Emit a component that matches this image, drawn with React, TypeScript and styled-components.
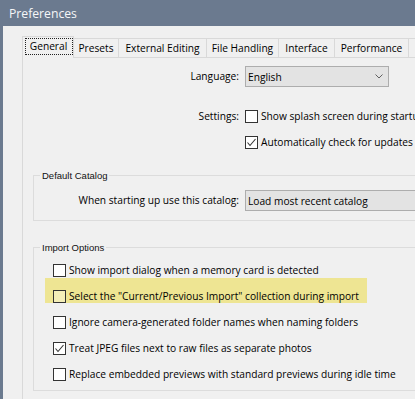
import React from 'react';
import styled, { createGlobalStyle } from 'styled-components';

const GlobalStyle = createGlobalStyle`
  html, body {
    margin: 0;
    padding: 0;
    background: #f0f0f0;
  }
  body {
    font-family: "Open Sans", "Noto Sans", Arial, sans-serif;
  }
`;

const Window = styled.div`
  width: 415px;
  height: 399px;
  overflow: hidden;
  background: #6b7a8f;
  display: flex;
  flex-direction: column;
`;

const TitleBar = styled.div`
  height: 26px;
  flex: none;
  display: flex;
  align-items: center;
  padding-left: 9px;
  color: #f5f6f8;
  font-family: "Open Sans", sans-serif;
  font-size: 12.2px;
`;

const Body = styled.div`
  flex: 1;
  margin-left: 3px;
  padding-top: 10px;
  background: #f0f0f0;
  overflow: hidden;
  display: flex;
  flex-direction: column;
  font-family: "Open Sans", sans-serif;
  font-size: 10.2px;
  color: #000;
`;

const TabStrip = styled.div`
  display: flex;
  align-items: flex-end;
  height: 21px;
  margin-left: 19px;
  flex: none;
`;

const Tab = styled.div<{ $width: number; $active?: boolean; $first?: boolean }>`
  box-sizing: border-box;
  flex: none;
  width: ${p => p.$width}px;
  height: ${p => (p.$active ? 22 : 19)}px;
  margin-bottom: ${p => (p.$active ? -1 : 0)}px;
  position: relative;
  z-index: ${p => (p.$active ? 1 : 0)};
  background: #f0f0f0;
  border-top: 1px solid #d9d9d9;
  border-right: 1px solid #d9d9d9;
  border-left: ${p => (p.$first ? '1px solid #d9d9d9' : 'none')};
  display: flex;
  justify-content: center;
  align-items: ${p => (p.$active ? 'flex-start' : 'center')};
  line-height: 15px;
  white-space: nowrap;
`;

const FocusRing = styled.span`
  box-sizing: border-box;
  display: flex;
  align-items: center;
  justify-content: center;
  width: 48px;
  height: 17px;
  margin-top: 1px;
  margin-left: 1px;
  border: 1px dotted #222;
`;

const Panel = styled.div`
  flex: 1;
  width: 560px;
  margin-left: 19px;
  padding-top: 8px;
  border-top: 1px solid #d9d9d9;
  border-left: 1px solid #d9d9d9;
`;

const FieldRow = styled.div<{ $labelWidth: number; $top?: boolean }>`
  display: grid;
  grid-template-columns: ${p => p.$labelWidth}px max-content;
  column-gap: 6px;
  align-items: ${p => (p.$top ? 'start' : 'center')};
  margin-top: ${p => (p.$top ? 23 : 0)}px;
`;

const Label = styled.div`
  text-align: right;
  line-height: 13px;
  white-space: nowrap;
`;

const Select = styled.div<{ $width: number }>`
  box-sizing: border-box;
  width: ${p => p.$width}px;
  height: 21px;
  padding: 0 5px 0 2px;
  background: #e3e3e3;
  border: 1px solid #adadad;
  display: flex;
  align-items: center;
  justify-content: space-between;
  white-space: nowrap;
`;

const CheckList = styled.div`
  display: flex;
  flex-direction: column;
  gap: 13px;
`;

const CheckRow = styled.div`
  display: flex;
  align-items: center;
  gap: 3px;
  height: 13px;
  line-height: 13px;
  white-space: nowrap;
`;

const Box = styled.span<{ $tint?: boolean }>`
  box-sizing: border-box;
  flex: none;
  width: 13px;
  height: 13px;
  border: 1px solid #333;
  background: ${p => (p.$tint ? 'rgba(255, 255, 255, 0.35)' : '#fff')};
  display: flex;
  align-items: center;
  justify-content: center;
`;

const Group = styled.fieldset<{ $gapTop: number }>`
  width: 520px;
  min-width: 0;
  margin: ${p => p.$gapTop}px 0 0 10px;
  padding: 9px 0 9px 0;
  border: 1px solid #dcdcdc;
`;

const Legend = styled.legend`
  margin-left: 6px;
  padding: 0 2px;
  font-family: "Liberation Sans", Arial, sans-serif;
  font-size: 9.5px;
  line-height: 11px;
  color: #111;
`;

const ImportList = styled.div`
  display: flex;
  flex-direction: column;
  gap: 13px;
  padding-top: 2px;
`;

const ImportItem = styled.div<{ $highlight?: boolean }>`
  width: fit-content;
  margin-left: 11px;
  padding: ${p => (p.$highlight ? '12px 8px 0 8px' : '0 8px 0 8px')};
  margin-top: ${p => (p.$highlight ? -12 : 0)}px;
  background: ${p => (p.$highlight ? '#eee593' : 'transparent')};
`;

const Chevron = () => (
  <svg width="8" height="5" viewBox="0 0 8 5">
    <path d="M0.5 0.5 L4 4 L7.5 0.5" fill="none" stroke="#606060" strokeWidth="1" />
  </svg>
);

const Check = () => (
  <svg width="11" height="11" viewBox="0 0 11 11">
    <path d="M1.5 5.5 L4 8.5 L9.5 2" fill="none" stroke="#333" strokeWidth="1.1" />
  </svg>
);

const CheckItem: React.FC<{ checked?: boolean; tint?: boolean; children: React.ReactNode }> = ({ checked, tint, children }) => (
  <CheckRow>
    <Box $tint={tint}>{checked && <Check />}</Box>
    <span>{children}</span>
  </CheckRow>
);

// the last tab sits past the window edge, only its border shows
const tabs = [
  { name: 'General', width: 52 },
  { name: 'Presets', width: 45 },
  { name: 'External Editing', width: 88 },
  { name: 'File Handling', width: 72 },
  { name: 'Interface', width: 56 },
  { name: 'Performance', width: 74 },
  { name: '', width: 70 },
];

const importOptions = [
  { text: 'Show import dialog when a memory card is detected' },
  { text: 'Select the "Current/Previous Import" collection during import', highlight: true },
  { text: 'Ignore camera-generated folder names when naming folders' },
  { text: 'Treat JPEG files next to raw files as separate photos', checked: true },
  { text: 'Replace embedded previews with standard previews during idle time' },
];

const App: React.FC = () => {
  return (
    <>
      <GlobalStyle />
      <Window>
        <TitleBar>Preferences</TitleBar>
        <Body>
          <TabStrip>
            {tabs.map((t, i) => (
              <Tab key={i} $width={t.width} $active={i === 0} $first={i === 0}>
                {i === 0 ? <FocusRing>{t.name}</FocusRing> : t.name}
              </Tab>
            ))}
          </TabStrip>
          <Panel>
            <FieldRow $labelWidth={216}>
              <Label>Language:</Label>
              <Select $width={144}>
                <span>English</span>
                <Chevron />
              </Select>
            </FieldRow>

            <FieldRow $labelWidth={216} $top>
              <Label>Settings:</Label>
              <CheckList>
                <CheckItem>Show splash screen during startup</CheckItem>
                <CheckItem checked>Automatically check for updates</CheckItem>
              </CheckList>
            </FieldRow>

            <Group $gapTop={21}>
              <Legend>Default Catalog</Legend>
              <FieldRow $labelWidth={205}>
                <Label>When starting up use this catalog:</Label>
                <Select $width={260}>
                  <span>Load most recent catalog</span>
                  <Chevron />
                </Select>
              </FieldRow>
            </Group>

            <Group $gapTop={21}>
              <Legend>Import Options</Legend>
              <ImportList>
                {importOptions.map(o => (
                  <ImportItem key={o.text} $highlight={o.highlight}>
                    <CheckItem checked={o.checked} tint={o.highlight}>
                      {o.text}
                    </CheckItem>
                  </ImportItem>
                ))}
              </ImportList>
            </Group>
          </Panel>
        </Body>
      </Window>
    </>
  );
};

export default App;
